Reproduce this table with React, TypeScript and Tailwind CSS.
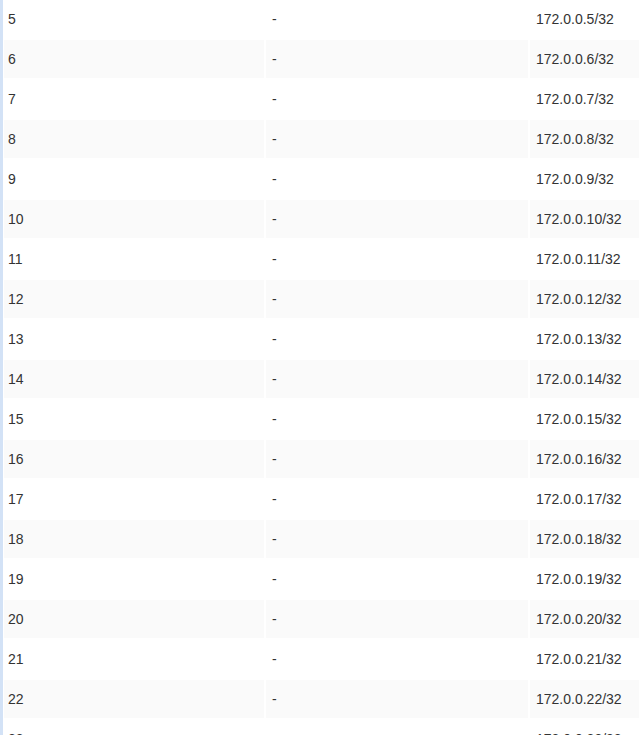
import React from "react";

const rows = Array.from({ length: 19 }, (_, i) => i + 5);

const App = () => {
  return (
    <div className="h-[735px] w-[639px] overflow-hidden bg-white font-['Liberation_Sans',Arial,sans-serif] text-[14px] text-[#333]">
      <div className="flex min-h-full flex-col gap-[2px] border-l-[3px] border-[#d3e2f6] pl-[1px]">
        {rows.map((n) => {
          const bg = n % 2 === 0 ? "bg-[#fafafa]" : "bg-white";
          return (
            <div key={n} className="flex h-[38px] shrink-0 gap-[2px]">
              <div className={`flex w-[260px] shrink-0 items-center px-[4px] pt-px ${bg}`}>
                {n}
              </div>
              <div className={`flex w-[262px] shrink-0 items-center px-[6px] pt-px ${bg}`}>
                -
              </div>
              <div className={`flex flex-1 items-center px-[6px] pt-px ${bg}`}>
                172.0.0.{n}/32
              </div>
            </div>
          );
        })}
      </div>
    </div>
  );
};

export default App;
